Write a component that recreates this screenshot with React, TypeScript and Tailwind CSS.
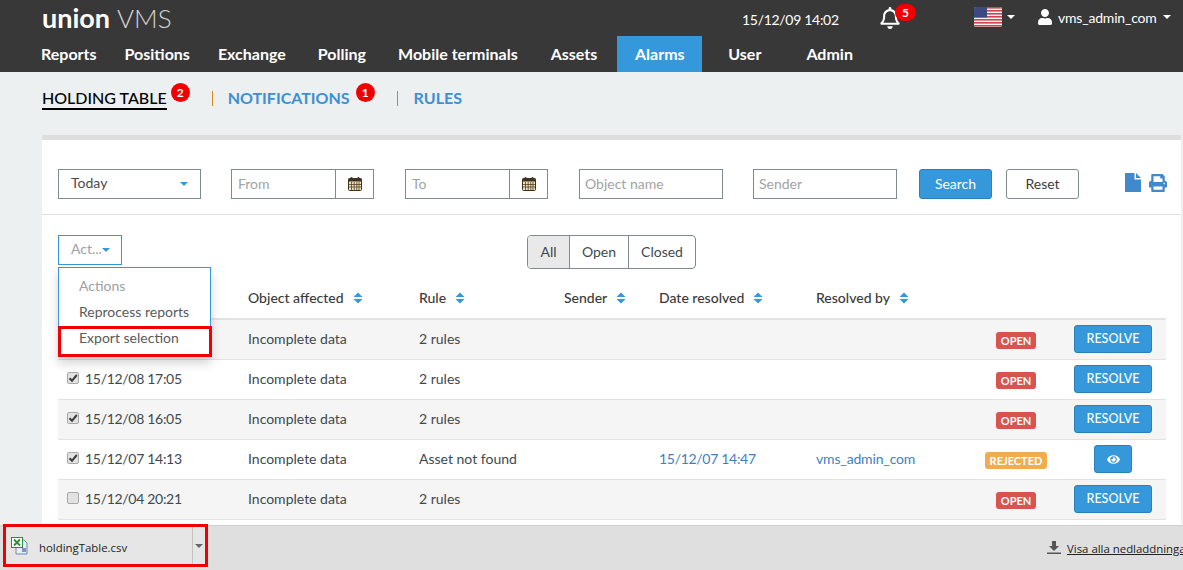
import { FaEye, FaPrint, FaRegBell, FaUser } from 'react-icons/fa'

const FONT = "font-['Lato','Liberation_Sans',sans-serif]"

const navItems = [
  { label: 'Reports', cls: 'ml-[41px]' },
  { label: 'Positions', cls: 'ml-[28px]' },
  { label: 'Exchange', cls: 'ml-[28px]' },
  { label: 'Polling', cls: 'ml-[32px]' },
  { label: 'Mobile terminals', cls: 'ml-[32px]' },
  { label: 'Assets', cls: 'ml-[33px]' },
]

type Row = {
  checked: boolean
  date: string
  rule: string
  resolved?: string
  by?: string
  status: 'OPEN' | 'REJECTED'
}

// first row's date sits behind the open actions menu
const rows: Row[] = [
  { checked: true, date: '', rule: '2 rules', status: 'OPEN' },
  { checked: true, date: '15/12/08 17:05', rule: '2 rules', status: 'OPEN' },
  { checked: true, date: '15/12/08 16:05', rule: '2 rules', status: 'OPEN' },
  {
    checked: true,
    date: '15/12/07 14:13',
    rule: 'Asset not found',
    resolved: '15/12/07 14:47',
    by: 'vms_admin_com',
    status: 'REJECTED',
  },
  { checked: false, date: '15/12/04 20:21', rule: '2 rules', status: 'OPEN' },
]

function Caret({ className }: { className: string }) {
  return (
    <span
      className={`inline-block h-0 w-0 border-x-[4px] border-t-[4px] border-x-transparent ${className}`}
    />
  )
}

function SortIcon() {
  return (
    <svg width="10" height="12" viewBox="0 0 10 12" className="ml-[9px] inline-block">
      <path d="M5 0.5 L9.5 5 H0.5 Z M0.5 7 H9.5 L5 11.5 Z" fill="#3498db" />
    </svg>
  )
}

function Badge({ n, className }: { n: number; className: string }) {
  return (
    <span
      className={`flex items-center justify-center rounded-full bg-[#f00000] font-bold leading-none text-white ${className}`}
    >
      {n}
    </span>
  )
}

function CalendarIcon() {
  return (
    <svg width="14" height="14" viewBox="0 0 14 14">
      <rect x="0.5" y="1.5" width="13" height="12" rx="1" fill="#f3dfb8" stroke="#3d3323" />
      <rect x="0.5" y="1.5" width="13" height="3" fill="#3d3323" />
      <path d="M3.5 5 V13 M6.2 5 V13 M8.8 5 V13 M11 5 V13 M1 7.5 H13 M1 10 H13" stroke="#4f4128" strokeWidth="0.8" />
      <rect x="2.5" y="0" width="2" height="3" rx="1" fill="#3d3323" />
      <rect x="9.5" y="0" width="2" height="3" rx="1" fill="#3d3323" />
    </svg>
  )
}

function DateField({ placeholder, className }: { placeholder: string; className: string }) {
  return (
    <div className={`flex h-[30px] w-[143px] border border-[#7f8c8d] ${className}`}>
      <div className="flex flex-1 items-center pb-[1px] pl-[6px] text-[14px] text-[#a3a3a3]">{placeholder}</div>
      <div className="flex w-[38px] items-center justify-center border-l border-[#7f8c8d]">
        <CalendarIcon />
      </div>
    </div>
  )
}

function CheckBox({ checked }: { checked: boolean }) {
  return (
    <span className="flex h-[12px] w-[12px] shrink-0 items-center justify-center rounded-[2px] border border-[#a8a8a8] bg-[#e2e2e2]">
      {checked && (
        <svg width="10" height="10" viewBox="0 0 10 10">
          <path d="M1.5 5.2 L4 7.8 L8.8 2" fill="none" stroke="#3a3a3a" strokeWidth="2" />
        </svg>
      )}
    </span>
  )
}

function UsFlag() {
  return (
    <svg width="28" height="20" viewBox="0 0 28 20" className="mt-[-3px] rounded-[2px]">
      <rect width="28" height="20" fill="#f4f4f4" />
      {[0, 3, 6, 9, 12, 15, 18].map((y) => (
        <rect key={y} y={y} width="28" height="1.6" fill="#c9474f" />
      ))}
      <rect width="13" height="10.5" fill="#3d4a82" />
    </svg>
  )
}

function ExcelIcon() {
  return (
    <svg width="17" height="18" viewBox="0 0 17 18">
      <path d="M5 3 H13 L16 6 V17 H5 Z" fill="#e8eef6" stroke="#6d87ad" />
      <rect x="11" y="11" width="4" height="4" fill="#7d95b8" />
      <rect x="0.5" y="0.5" width="11" height="10" fill="#fff" stroke="#2f8a3a" />
      <path d="M3 2.5 L9 8.5 M9 2.5 L3 8.5" stroke="#2f8a3a" strokeWidth="1.8" />
    </svg>
  )
}

export default function App() {
  return (
    <div className={`flex h-[570px] w-[1183px] flex-col overflow-hidden bg-[#ecf0f1] ${FONT}`}>
      <header className="h-[72px] shrink-0 bg-[#383838] text-white">
        <div className="flex h-[36px] items-center">
          <div className="ml-[42px] flex w-[700px] items-baseline text-[27px] leading-[36px]">
            <span className="font-bold">union</span>
            <span className="ml-[7px] text-[26px] font-light text-[#d5d5d5]">VMS</span>
          </div>
          <span className="w-[138px] pt-[2px] text-[14px] tracking-[-0.3px]">15/12/09 14:02</span>
          <div className="relative w-[94px]">
            <FaRegBell size={22} className="ml-[-1px]" />
            <Badge n={5} className="absolute left-[15px] top-[-3px] h-[17px] w-[21px] text-[12px]" />
          </div>
          <UsFlag />
          <Caret className="ml-[5px] mt-[-3px] border-t-white" />
          <FaUser size={16} className="ml-[22px] mt-[-3px]" />
          <span className="ml-[5px] mt-[-2px] text-[14px] tracking-[-0.2px]">vms_admin_com</span>
          <Caret className="ml-[6px] mt-[-3px] border-t-white" />
        </div>
        <nav className="flex h-[36px] items-center text-[16px] font-bold">
          {navItems.map((item) => (
            <a key={item.label} className={item.cls}>
              {item.label}
            </a>
          ))}
          <a className="ml-[20px] flex h-full w-[85px] items-center justify-center bg-[#3498db]">Alarms</a>
          <a className="ml-[26px]">User</a>
          <a className="ml-[45px]">Admin</a>
        </nav>
      </header>

      <div className="flex h-[63px] shrink-0 items-start pl-[42px] pt-[16px] text-[16px] font-bold leading-[20px]">
        <a className="border-b-2 border-black font-medium text-black">HOLDING TABLE</a>
        <Badge n={2} className="ml-[4px] mt-[-5px] h-[19px] w-[19px] text-[12px]" />
        <span className="ml-[22px] mt-[3px] h-[15px] w-px bg-[#d08a1e]" />
        <a className="ml-[15px] text-[#3f8fd2]">NOTIFICATIONS</a>
        <Badge n={1} className="ml-[6px] mt-[-5px] h-[19px] w-[19px] text-[12px]" />
        <span className="ml-[22px] mt-[3px] h-[15px] w-px bg-[#5d9ccf]" />
        <a className="ml-[16px] text-[#3f8fd2]">RULES</a>
      </div>

      <main className="relative ml-[42px] mr-[2px] min-h-0 flex-1 border-t-[5px] border-[#dedede] bg-white text-[14px] text-[#3c4a50]">
        <div className="flex h-[75px] items-start border-b border-[#e0e0e0] pl-[16px] pt-[29px]">
          <div className="flex h-[30px] w-[143px] items-center justify-between border border-[#7f8c8d] pl-[12px] pr-[12px] text-[#4a4a4a]">
            <span className="mt-[-3px]">Today</span>
            <Caret className="border-t-[#3498db]" />
          </div>
          <DateField placeholder="From" className="ml-[30px]" />
          <DateField placeholder="To" className="ml-[31px]" />
          <div className="ml-[31px] flex h-[30px] w-[144px] items-center border border-[#7f8c8d] pb-[1px] pl-[5px] text-[#a3a3a3]">
            Object name
          </div>
          <div className="ml-[30px] flex h-[30px] w-[144px] items-center border border-[#7f8c8d] pb-[1px] pl-[5px] text-[#a3a3a3]">
            Sender
          </div>
          <button
            type="button"
            className="ml-[22px] h-[30px] w-[73px] rounded-[3px] border border-[#2a80b9] bg-[#3498db] pb-[1px] text-white"
          >
            Search
          </button>
          <button
            type="button"
            className="ml-[14px] h-[30px] w-[73px] rounded-[3px] border border-[#7f8c8d] bg-white pb-[1px] text-[#3c3c3c]"
          >
            Reset
          </button>
          <div className="ml-[46px] mt-[4px] flex items-center gap-[8px] text-[#4289cc]">
            <svg width="16" height="19" viewBox="0 0 16 19" fill="currentColor">
              <path d="M0 0 H9.5 V6.5 H16 V19 H0 Z M11 0 L16 5 H11 Z" />
            </svg>
            <FaPrint size={18} />
          </div>
        </div>

        <div className="relative h-[103px]">
          <div className="absolute left-[16px] top-[20px] flex h-[30px] w-[64px] items-center border border-[#3498db] pb-[3px] pl-[12px] text-[#a0a0a0]">
            Act...
            <Caret className="mt-[3px] border-t-[#3498db]" />
          </div>
          <div className="absolute left-[485px] top-[20px] flex h-[34px] w-[169px] overflow-hidden rounded-[4px] border border-[#7f8c8d]">
            <div className="flex w-[42px] items-center justify-center border-r border-[#7f8c8d] bg-[#e9e9e9] pb-[1px]">All</div>
            <div className="flex w-[59px] items-center justify-center border-r border-[#7f8c8d] pb-[1px]">Open</div>
            <div className="flex flex-1 items-center justify-center pb-[1px]">Closed</div>
          </div>
        </div>

        <table className="ml-[16px] w-[1108px] table-fixed border-collapse">
          <colgroup>
            <col className="w-[190px]" />
            <col className="w-[171px]" />
            <col className="w-[145px]" />
            <col className="w-[95px]" />
            <col className="w-[157px]" />
            <col className="w-[152px]" />
            <col className="w-[96px]" />
            <col className="w-[102px]" />
          </colgroup>
          <thead>
            <tr className="h-[0px]">
              <th />
              {['Object affected', 'Rule', 'Sender', 'Date resolved', 'Resolved by'].map((h) => (
                <th key={h} className="h-0 p-0 text-left font-medium">
                  <div className="relative h-0">
                    <span className="absolute bottom-[10px] left-0 flex items-center whitespace-nowrap text-[#3a3a3a]">
                      {h}
                      <SortIcon />
                    </span>
                  </div>
                </th>
              ))}
              <th />
              <th />
            </tr>
          </thead>
          <tbody>
            {rows.map((row, i) => (
              <tr
                key={i}
                className={`h-[40px] border-b border-[#e2e2e2] ${i === 0 ? 'border-t-2' : ''} ${
                  i % 2 === 0 ? 'bg-[#f5f5f5]' : 'bg-white'
                }`}
              >
                <td className="pb-[2px]">
                  <div className="flex items-center pl-[9px]">
                    <CheckBox checked={row.checked} />
                    <span className="ml-[6px] tracking-[-0.3px]">{row.date}</span>
                  </div>
                </td>
                <td className="pb-[2px]">Incomplete data</td>
                <td className="pb-[2px]">{row.rule}</td>
                <td />
                <td className="pb-[2px] tracking-[-0.3px] text-[#3f7fbf]">{row.resolved}</td>
                <td className="pb-[2px] tracking-[-0.15px] text-[#3f7fbf]">{row.by}</td>
                <td className="text-center">
                  <span
                    className={`inline-block rounded-[3px] px-[5px] text-[11px] font-bold leading-[17px] text-white ${
                      row.status === 'OPEN' ? 'bg-[#d9534f]' : 'bg-[#f0ad4e]'
                    }`}
                  >
                    {row.status}
                  </span>
                </td>
                <td className="pr-[4px] text-center">
                  {row.status === 'OPEN' ? (
                    <button
                      type="button"
                      className="h-[28px] w-[78px] rounded-[3px] border border-[#2a80b9] bg-[#3498db] text-[12.5px] font-medium text-white"
                    >
                      RESOLVE
                    </button>
                  ) : (
                    <button
                      type="button"
                      className="inline-flex h-[28px] w-[38px] items-center justify-center rounded-[3px] border border-[#2a80b9] bg-[#3498db] text-white"
                    >
                      <FaEye size={13} />
                    </button>
                  )}
                </td>
              </tr>
            ))}
          </tbody>
        </table>

        <div className="absolute left-[16px] top-[127px] z-10 h-[90px] w-[153px] border border-[#3498db] bg-white shadow-[0_6px_10px_rgba(0,0,0,0.18)]">
          <div className="pl-[20px] pt-[8px] leading-[20px] text-[#a0a0a0]">Actions</div>
          <div className="mt-[6px] pl-[20px] leading-[20px] text-[#5a5a5a]">Reprocess reports</div>
          <div className="absolute bottom-[-1px] left-[-1px] h-[31px] w-[154px] border-[3px] border-[#f00000] bg-white pl-[18px] leading-[18px] text-[#5a5a5a]">
            Export selection
          </div>
        </div>
      </main>

      <footer className="relative z-20 flex h-[45px] shrink-0 items-start border-t border-[#d0d0d0] bg-[#dfdfdf] font-['Open_Sans','Liberation_Sans',sans-serif] text-[11.4px] text-[#222222]">
        <div className="ml-[3px] mt-[-2px] flex h-[43px] w-[205px] shrink-0 items-center border-[3px] border-[#f00000] bg-[#e6e6e6]">
          <span className="ml-[5px] flex">
            <ExcelIcon />
          </span>
          <span className="ml-[11px] w-[153px] pt-[4px]">holdingTable.csv</span>
          <div className="flex h-full flex-1 items-center justify-center border-l border-[#c4c4c4]">
            <Caret className="border-t-[#666666]" />
          </div>
        </div>
        <svg width="14" height="13" viewBox="0 0 14 13" className="ml-[839px] mt-[15px] shrink-0">
          <path d="M5 0 H9 V5 H12 L7 10 L2 5 H5 Z M0 11.5 H14 V13 H0 Z" fill="#555555" />
        </svg>
        <a className="ml-[6px] mt-[14px] shrink-0 whitespace-nowrap underline">Visa alla nedladdningar</a>
      </footer>
    </div>
  )
}
